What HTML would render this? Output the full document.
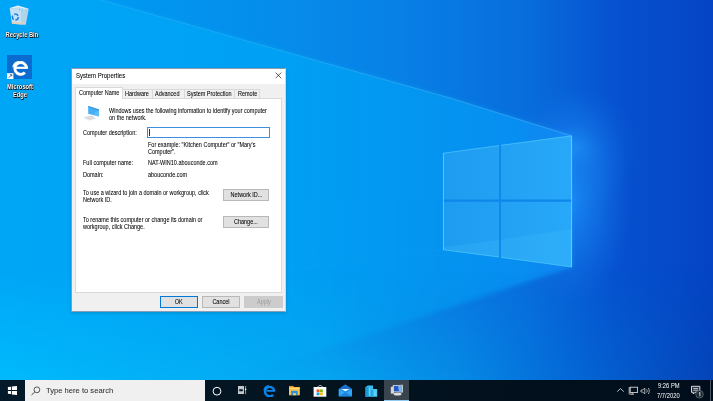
<!DOCTYPE html>
<html><head><meta charset="utf-8">
<style>
html,body{margin:0;padding:0;width:713px;height:401px;overflow:hidden;background:#0a60d0;font-family:"Liberation Sans",sans-serif;}
.abs{position:absolute}
#wall{position:absolute;left:0;top:0}
.dlg{position:absolute;left:71px;top:68px;width:215px;height:243.5px;background:#f0f0f0;border:1px solid rgba(70,100,140,.6);border-right-color:rgba(200,210,220,.8);box-sizing:border-box;box-shadow:0 1px 3px rgba(0,0,0,.15)}
.title{position:absolute;left:0;top:0;width:100%;height:15px;background:#fff}
.t{position:absolute;white-space:nowrap;font-size:6.4px;color:#000;line-height:7px;transform:scaleX(.86);transform-origin:0 0;-webkit-text-stroke:0.06px currentColor}
.tab{position:absolute;top:89px;height:9px;background:#f0f0f0;border:1px solid #d9d9d9;border-bottom:none;box-sizing:border-box}
.btn{position:absolute;background:#e1e1e1;border:1px solid #b8b8b8;box-sizing:border-box;font-size:6.4px;text-align:center;line-height:10.6px;color:#000;white-space:nowrap}
.btn span{display:inline-block;transform:scaleX(.86);-webkit-text-stroke:0.06px currentColor}
.tb{position:absolute;left:0;top:379.5px;width:713px;height:21.5px;background:linear-gradient(90deg,#041a2a 0%,#03141f 45%,#010d1b 100%)}
.lbl{position:absolute;color:#fff;font-size:6.4px;line-height:7px;text-align:center;text-shadow:0 0 0.6px #000,0.5px 0.5px 0.6px #000,0 0 1.5px rgba(0,0,0,.8);white-space:nowrap;font-weight:bold;transform:scaleX(.9);transform-origin:50% 0}
</style></head><body>
<svg id="wall" width="713" height="401" viewBox="0 0 713 401">
 <defs>
  <linearGradient id="gUp" x1="0" y1="0" x2="713" y2="0" gradientUnits="userSpaceOnUse">
   <stop offset="0" stop-color="#00a4f6"/>
   <stop offset="0.17" stop-color="#0098f2"/>
   <stop offset="0.40" stop-color="#068cea"/>
   <stop offset="0.56" stop-color="#0880e6"/>
   <stop offset="0.74" stop-color="#086ddc"/>
   <stop offset="0.86" stop-color="#0652d0"/>
   <stop offset="1" stop-color="#0444c4"/>
  </linearGradient>
  <linearGradient id="gBeam" x1="0" y1="0" x2="572" y2="0" gradientUnits="userSpaceOnUse">
   <stop offset="0" stop-color="#00a6f6"/>
   <stop offset="0.5" stop-color="#00a0f4"/>
   <stop offset="0.77" stop-color="#0494f0"/>
   <stop offset="1" stop-color="#0a8af2"/>
  </linearGradient>
  <linearGradient id="gLow" x1="0" y1="0" x2="713" y2="0" gradientUnits="userSpaceOnUse">
   <stop offset="0" stop-color="#00bafc"/>
   <stop offset="0.45" stop-color="#05a6f0"/>
   <stop offset="0.65" stop-color="#0688e4"/>
   <stop offset="0.80" stop-color="#0468d6"/>
   <stop offset="1" stop-color="#0444b8"/>
  </linearGradient>
  <linearGradient id="gLowV" x1="0" y1="270" x2="0" y2="380" gradientUnits="userSpaceOnUse">
   <stop offset="0" stop-color="#fff" stop-opacity="0"/>
   <stop offset="1" stop-color="#fff" stop-opacity="1"/>
  </linearGradient>
  <mask id="mLow"><rect width="713" height="401" fill="url(#gLowV)"/></mask>
  <radialGradient id="glow" cx="576" cy="148" r="62" gradientUnits="userSpaceOnUse">
   <stop offset="0" stop-color="#2aa8ff" stop-opacity="0.6"/>
   <stop offset="0.4" stop-color="#1a90f8" stop-opacity="0.25"/>
   <stop offset="1" stop-color="#1a80f0" stop-opacity="0"/>
  </radialGradient>
  <radialGradient id="glowR" cx="0.5" cy="0.5" r="0.5">
   <stop offset="0" stop-color="#1c90fa" stop-opacity="0.8"/>
   <stop offset="0.5" stop-color="#1a84f2" stop-opacity="0.4"/>
   <stop offset="1" stop-color="#1a70e8" stop-opacity="0"/>
  </radialGradient>
  <linearGradient id="lineG" x1="101" y1="0" x2="572" y2="0" gradientUnits="userSpaceOnUse">
   <stop offset="0" stop-color="#8adcff" stop-opacity="0.25"/>
   <stop offset="0.5" stop-color="#8adcff" stop-opacity="0.35"/>
   <stop offset="1" stop-color="#8adcff" stop-opacity="0.5"/>
  </linearGradient>
  <linearGradient id="pane" x1="443" y1="0" x2="572" y2="0" gradientUnits="userSpaceOnUse">
   <stop offset="0" stop-color="#1e9cf0"/>
   <stop offset="1" stop-color="#28a8f8"/>
  </linearGradient>
  <filter id="soft" x="-5%" y="-5%" width="110%" height="110%" color-interpolation-filters="sRGB"><feGaussianBlur stdDeviation="2.5"/></filter>
  <filter id="soft1" x="-5%" y="-5%" width="110%" height="110%" color-interpolation-filters="sRGB"><feGaussianBlur stdDeviation="0.6"/></filter>
  <filter id="soft6" x="-20%" y="-20%" width="140%" height="140%"><feGaussianBlur stdDeviation="6"/></filter>
 </defs>
 <rect x="0" y="0" width="713" height="401" fill="url(#gUp)"/>
 <polygon points="-10,-40 101,0 286,52 450,98 572,136 572,267 140,411 -10,411" fill="url(#gBeam)" filter="url(#soft)"/>
 <polygon points="-10,-40 101,0 286,52 450,98 572,136 572,200 -10,200" fill="url(#gBeam)" filter="url(#soft1)"/>
 <rect x="0" y="0" width="713" height="401" fill="url(#gLow)" mask="url(#mLow)"/>
 <rect x="0" y="0" width="713" height="401" fill="url(#glow)"/>
 <ellipse cx="572" cy="200" rx="60" ry="105" fill="url(#glowR)"/>
 <g stroke="#8adcff" stroke-width="0.6" fill="none">
  <path d="M101,0 L286,52 L450,98 L572,136" stroke="url(#lineG)"/>
  <path d="M286,270.5 L443,250" stroke-opacity="0.08"/>
  <path d="M145,379 L572,267" stroke-opacity="0.07"/>
 </g>
 <g>
  <polygon points="443,153 572,135.5 572,267 443,250" fill="#0e86ea"/>
  <polygon points="443,153 499.2,145.4 499.2,199.5 443,199.5" fill="url(#pane)"/>
  <polygon points="501,145.1 572,135.5 572,199.5 501,199.5" fill="url(#pane)"/>
  <polygon points="443,201.7 499.2,201.7 499.2,257.2 443,250" fill="url(#pane)"/>
  <polygon points="501,201.7 572,201.7 572,267 501,257.5" fill="url(#pane)"/>
  <polygon points="443,247.5 499,239.8 499,257.2 443,250" fill="#50c8ff" fill-opacity="0.18"/>
  <polygon points="501,239.5 572,229 572,267 501,257.5" fill="#50c8ff" fill-opacity="0.18"/>
  <g fill="none" stroke="#60d8ff" stroke-width="0.8">
   <path d="M443.4,250 L443.4,153.2 L499,145.6 M501,145.3 L571.6,135.8 L571.6,267 L501,257.3 M499,257 L443.4,249.8" stroke-opacity="0.65"/>
   <path d="M443.5,153 L443.5,250" stroke-opacity="0.5" stroke-width="1"/>
   <path d="M571.5,136 L571.5,267" stroke-opacity="0.6" stroke-width="1"/>
  </g>
 </g>
</svg>

<!-- desktop icons -->
<svg class="abs" style="left:0;top:0" width="40" height="40" viewBox="0 0 40 40">
 <polygon points="9.6,8 21,10.4 21,24.4 12,23.7" fill="#d2e6f4" fill-opacity="0.92"/>
 <polygon points="21,10.4 28.8,8.7 25.8,24.6 21,24.4" fill="#bcd6ea" fill-opacity="0.95"/>
 <polygon points="9.6,8 18,5.4 28.8,8.7 21,10.4" fill="#e4f2fb"/>
 <polygon points="11.5,9 18,7 26.5,9 21,10" fill="#c0dcf0"/>
 <polygon points="11.8,21.8 21,22.4 25.9,22.6 25.8,24.6 21,24.4 12,23.7" fill="#e6cdb8" fill-opacity="0.9"/>
 <circle cx="19.5" cy="9.3" r="0.6" fill="#40c8ff"/>
 <circle cx="22.2" cy="9.3" r="0.6" fill="#40c8ff"/>
 <circle cx="15.3" cy="17.1" r="3" fill="none" stroke="#1a7ee0" stroke-width="1.5" stroke-dasharray="4.5 1.8"/>
</svg>
<div class="lbl" style="left:4px;top:30.8px;width:32px">Recycle Bin</div>

<div class="abs" style="left:7px;top:55px;width:25px;height:24px;background:#0c6bcf"></div>
<svg class="abs" style="left:7px;top:55px" width="25" height="24" viewBox="0 0 25 24">
 <path d="M19.6,13.2 A5.9,5.9 0 1 0 17.9,17.6" fill="none" stroke="#fff" stroke-width="2.9"/>
 <path d="M9,12.8 L20.8,12.8" stroke="#fff" stroke-width="2.2"/>
 <path d="M5.4,12.6 C5.6,8.2 9,5.6 13,5.9 C10.2,6.8 8.2,8.8 7.6,11.6 Z" fill="#fff"/>
 <rect x="0" y="18.2" width="6.4" height="5.8" fill="#fff"/>
 <path d="M1.8,22.6 L4.6,19.8 M3,19.7 L4.7,19.7 L4.7,21.4" stroke="#1a4f90" stroke-width="0.8" fill="none"/>
</svg>
<div class="lbl" style="left:2px;top:83.3px;width:36px;line-height:7.2px">Microsoft<br>Edge</div>

<!-- dialog -->
<div class="dlg"><div class="title"></div></div>
<div class="t" style="left:76.1px;top:72.1px;font-size:7px;line-height:8px">System Properties</div>
<svg class="abs" style="left:274.6px;top:72.4px" width="7" height="7" viewBox="0 0 7 7"><path d="M0.6,0.6 L6.2,6.2 M6.2,0.6 L0.6,6.2" stroke="#1a1a1a" stroke-width="0.7"/></svg>

<!-- tab panel -->
<div class="abs" style="left:75px;top:98px;width:207px;height:195px;background:#fff;border:1px solid #dadada;box-sizing:border-box"></div>
<div class="tab" style="left:122px;width:31px"></div>
<div class="tab" style="left:152px;width:33px"></div>
<div class="tab" style="left:184px;width:51px"></div>
<div class="tab" style="left:234px;width:26px"></div>
<div class="abs" style="left:75px;top:87px;width:48px;height:12px;background:#fff;border:1px solid #dadada;border-bottom:none;box-sizing:border-box"></div>
<div class="t" style="left:78.9px;top:89.3px">Computer Name</div>
<div class="t" style="left:125.3px;top:90.3px">Hardware</div>
<div class="t" style="left:155.4px;top:90.3px">Advanced</div>
<div class="t" style="left:187.4px;top:90.3px">System Protection</div>
<div class="t" style="left:237.9px;top:90.3px">Remote</div>

<!-- computer icon -->
<svg class="abs" style="left:82px;top:104px" width="20" height="18" viewBox="0 0 20 18">
 <polygon points="1.3,13.6 8.5,11.4 14.5,14.6 7.2,16.6" fill="#dcdfe2"/>
 <polygon points="9,12 12,12.8 10,13.5" fill="#c8ccd0"/>
 <polygon points="6.2,2.1 17,5.4 17,12.6 6.2,9.8" fill="#46aef4"/>
 <polygon points="6.2,2.1 17,5.4 17,6.4 6.2,3.1" fill="#2a90dc"/>
 <polygon points="13,8 17,6.5 17,12.6 12,11.3" fill="#6cc4fa" fill-opacity="0.6"/>
</svg>
<div class="t" style="left:108.6px;top:107.1px">Windows uses the following information to identify your computer<br>on the network.</div>

<div class="t" style="left:83px;top:129px">Computer description:</div>
<div class="abs" style="left:147px;top:127px;width:123px;height:11px;background:#fff;border:1px solid #3f90dc;box-sizing:border-box"></div>
<div class="abs" style="left:148.8px;top:129px;width:0.6px;height:7px;background:#333"></div>
<div class="t" style="left:147.9px;top:141px">For example: "Kitchen Computer" or "Mary's<br>Computer".</div>
<div class="t" style="left:83.2px;top:158.9px">Full computer name:</div>
<div class="t" style="left:147.8px;top:158.9px">NAT-WIN10.abouconde.com</div>
<div class="t" style="left:83.2px;top:171.2px">Domain:</div>
<div class="t" style="left:147.8px;top:171.2px">abouconde.com</div>
<div class="t" style="left:83px;top:189.3px">To use a wizard to join a domain or workgroup, click<br>Network ID.</div>
<div class="btn" style="left:223px;top:189px;width:46px;height:12px"><span>Network ID...</span></div>
<div class="t" style="left:83px;top:216.1px">To rename this computer or change its domain or<br>workgroup, click Change.</div>
<div class="btn" style="left:223px;top:216px;width:46px;height:11.5px"><span>Change...</span></div>

<div class="btn" style="left:160px;top:296px;width:38px;height:12px;border:1.2px solid #0078d7"><span>OK</span></div>
<div class="btn" style="left:202px;top:296px;width:38px;height:12px"><span>Cancel</span></div>
<div class="btn" style="left:244px;top:296px;width:39px;height:12px;background:#cccccc;border-color:#cccccc;color:#a0a0a0"><span>Apply</span></div>

<!-- taskbar -->
<div class="tb"></div>
<svg class="abs" style="left:7px;top:385px" width="11" height="11" viewBox="0 0 11 11">
 <path d="M0.9,2.1 L4,1.7 L4,5.1 L0.9,5.1 Z M4.8,1.5 L10,1 L10,5.1 L4.8,5.1 Z M0.9,5.9 L4,5.9 L4,9 L0.9,8.8 Z M4.8,5.9 L10,5.9 L10,10 L4.8,9.4 Z" fill="#fff"/>
</svg>
<div class="abs" style="left:25px;top:380px;width:179.5px;height:21px;background:#f0f0f0"></div>
<svg class="abs" style="left:30px;top:385px" width="12" height="11" viewBox="0 0 12 11">
 <circle cx="6.9" cy="4.8" r="2.9" fill="none" stroke="#333" stroke-width="0.8"/>
 <path d="M4.8,6.9 L1.6,10" stroke="#333" stroke-width="0.9"/>
</svg>
<div class="t" style="left:46.2px;top:385.8px;font-size:8px;line-height:9px;color:#333;transform:scaleX(.95)">Type here to search</div>
<svg class="abs" style="left:211px;top:385px" width="12" height="12" viewBox="0 0 12 12">
 <circle cx="6" cy="6.2" r="3.9" fill="none" stroke="#fff" stroke-width="1"/>
</svg>
<svg class="abs" style="left:236px;top:385px" width="12" height="11" viewBox="0 0 12 11">
 <path fill-rule="evenodd" d="M2,1 L8,1 L8,9 L2,9 Z M3.2,4.2 L6.8,4.2 L6.8,6.2 L3.2,6.2 Z" fill="#c4c8cc"/>
 <path d="M9.6,1 L9.6,9.2" stroke="#b8bcc0" stroke-width="0.8"/>
 <circle cx="9.6" cy="4.4" r="0.8" fill="#fff"/>
</svg>
<!-- edge -->
<svg class="abs" style="left:261.5px;top:382.6px" width="14" height="14" viewBox="0 0 14 14">
 <path d="M12.4,8.2 A4.7,4.7 0 1 0 11.1,11.9" fill="none" stroke="#0a84e8" stroke-width="2.4"/>
 <path d="M4.6,7.9 L13,7.9" stroke="#0a84e8" stroke-width="1.8"/>
 <path d="M1.4,7.6 C1.6,4.2 4.2,1.6 7.6,2 C5.6,2.8 4.2,4.4 3.8,6.6 Z" fill="#0a84e8"/>
</svg>
<!-- explorer -->
<svg class="abs" style="left:288px;top:385px" width="13" height="11" viewBox="0 0 13 11">
 <path d="M1,1 L5,1 L6,2 L11.8,2 L11.8,10.2 L1,10.2 Z" fill="#f8c44e"/>
 <rect x="1" y="0.9" width="4.2" height="1.2" fill="#e8962a"/>
 <rect x="1" y="3" width="10.8" height="1" fill="#fbd870"/>
 <rect x="3.1" y="5.8" width="6.6" height="4.4" fill="#2b8fe0"/>
 <rect x="5" y="8.1" width="3" height="2.1" fill="#f8c44e"/>
</svg>
<!-- store -->
<svg class="abs" style="left:313px;top:383.5px" width="14" height="13" viewBox="0 0 14 13">
 <path d="M4.9,3.4 C4.9,0.9 9.4,0.9 9.4,3.4" fill="none" stroke="#e8e8e8" stroke-width="0.8"/>
 <rect x="0.6" y="3" width="12.7" height="9.7" fill="#fff"/>
 <rect x="3.6" y="5.4" width="2.9" height="2.7" fill="#f35325"/>
 <rect x="6.9" y="5.4" width="2.9" height="2.7" fill="#81bc06"/>
 <rect x="3.6" y="8.5" width="2.9" height="2.7" fill="#05a6f0"/>
 <rect x="6.9" y="8.5" width="2.9" height="2.7" fill="#ffba08"/>
</svg>
<!-- mail -->
<svg class="abs" style="left:338px;top:384px" width="15" height="13" viewBox="0 0 15 13">
 <polygon points="0.8,5 7.3,0.5 13.9,5 13.9,12.2 0.8,12.2" fill="#1f8ce6"/>
 <polygon points="0.8,5 7.3,0.5 13.9,5" fill="#1a6fcc"/>
 <polygon points="3,4.9 11.7,4.9 7.3,7.2" fill="#f4f8fc"/>
 <polygon points="0.8,5.2 7.3,9 13.9,5.2 13.9,12.2 0.8,12.2" fill="#34a8f4"/>
 <polygon points="0.8,12.2 7.3,8.2 13.9,12.2" fill="#1c86de"/>
</svg>
<!-- building blocks -->
<svg class="abs" style="left:365px;top:384.5px" width="13" height="12" viewBox="0 0 13 12">
 <polygon points="0.5,2 3,0.5 8,0.5 8,11.7 0.5,11.7" fill="#38bdf0"/>
 <rect x="0.5" y="2" width="3" height="9.7" fill="#1e9ad6"/>
 <polygon points="6,5 8,4 12.2,4 12.2,11.7 6,11.7" fill="#48c8f4"/>
 <rect x="6" y="5" width="2.2" height="6.7" fill="#2aa6de"/>
 <path d="M4.5,3 L4.5,11 M10,6 L10,11" stroke="#9ee4ff" stroke-width="0.5"/>
</svg>
<!-- active app -->
<div class="abs" style="left:384px;top:380px;width:25px;height:21px;background:#39444f"></div>
<div class="abs" style="left:384px;top:399.5px;width:25px;height:1.5px;background:#92cbf2"></div>
<svg class="abs" style="left:390px;top:384px" width="14" height="12" viewBox="0 0 14 12">
 <polygon points="0.8,3 4,2.2 4,9.5 0.8,9.8" fill="#d8d2c8"/>
 <polygon points="2.8,1.2 12.8,0.8 12.8,8.5 2.8,8.2" fill="#e6eaee"/>
 <polygon points="3.8,2 11.8,1.6 11.8,7.6 3.8,7.4" fill="#2456c8"/>
 <polygon points="8,1.8 11.8,1.6 11.8,7.6 9,7.5" fill="#7ab8ec"/>
 <ellipse cx="7.5" cy="10.2" rx="4" ry="1.4" fill="#e0e0e0"/>
</svg>
<!-- tray -->
<svg class="abs" style="left:616px;top:387px" width="9" height="6" viewBox="0 0 9 6"><path d="M1.2,4.6 L4.5,1.6 L7.8,4.6" fill="none" stroke="#e8e8e8" stroke-width="0.8"/></svg>
<svg class="abs" style="left:628px;top:386px" width="11" height="10" viewBox="0 0 11 10">
 <rect x="2.2" y="1.2" width="7.4" height="5.3" fill="none" stroke="#e8e8e8" stroke-width="0.8"/>
 <path d="M1.2,1 L1.2,8.2 M1.6,8.2 L6,8.2 M4.2,6.6 L4.2,8.2" stroke="#e8e8e8" stroke-width="0.8" fill="none"/>
</svg>
<svg class="abs" style="left:640px;top:386px" width="11" height="10" viewBox="0 0 11 10">
 <path d="M1,4 L2.8,4 L4.8,2 L4.8,8 L2.8,6 L1,6 Z" fill="none" stroke="#e8e8e8" stroke-width="0.7"/>
 <path d="M6.6,3.4 C7.4,4.2 7.4,5.8 6.6,6.6 M8.2,2 C9.6,3.5 9.6,6.5 8.2,8" fill="none" stroke="#e8e8e8" stroke-width="0.7"/>
</svg>
<div class="t" style="left:657.6px;top:382.1px;color:#fff;font-size:6.4px;line-height:7px;transform:scaleX(.91);-webkit-text-stroke:0">9:26 PM</div>
<div class="t" style="left:657.3px;top:391.5px;color:#fff;font-size:6.4px;line-height:7px;transform:scaleX(.91);-webkit-text-stroke:0">7/7/2020</div>
<svg class="abs" style="left:690px;top:385px" width="15" height="14" viewBox="0 0 15 14">
 <path d="M1.5,1.3 L9.8,1.3 L9.8,7.3 L5,7.3 L3.3,9 L3.3,7.3 L1.5,7.3 Z" fill="#fff" fill-opacity="0.12" stroke="#f0f0f0" stroke-width="0.9"/>
 <path d="M3.2,3.4 L8.2,3.4 M3.2,5.2 L8.2,5.2" stroke="#f0f0f0" stroke-width="0.8"/>
 <circle cx="9.5" cy="9.3" r="3.8" fill="#1c2630" stroke="#7a8690" stroke-width="0.6"/>
 <path d="M8.8,8.2 L9.9,7.4 L9.9,11.4" fill="none" stroke="#fff" stroke-width="0.8"/>
</svg>
<div class="abs" style="left:710px;top:380px;width:1px;height:21px;background:#4a5560"></div>
</body></html>
